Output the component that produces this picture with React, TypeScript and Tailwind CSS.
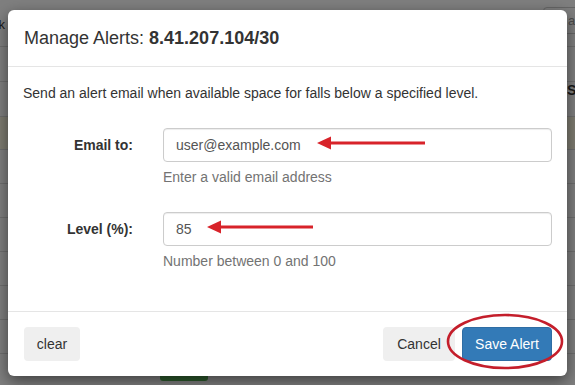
import { useState } from 'react';

function Arrow({ width }: { width: number }) {
  return (
    <svg width={width} height="14" viewBox={`0 0 ${width} 14`} className="block">
      <polygon points={`0,7 14,0.5 14,13.5`} fill="#d8232a" />
      <rect x="12" y="5.5" width={width - 12} height="3" fill="#d8232a" />
    </svg>
  );
}

export default function App() {
  const [email, setEmail] = useState('user@example.com');
  const [level, setLevel] = useState('85');

  const rows = [0, 1, 2, 3, 4, 5, 6, 7, 8];

  return (
    <div
      className="relative w-[575px] h-[385px] overflow-hidden bg-white text-[14px] text-[#333]"
      style={{ fontFamily: '"Liberation Sans", Arial, sans-serif' }}
    >
      {/* page behind the modal */}
      <div className="flex flex-col">
        <div className="h-[47px] flex items-start justify-between border-b border-[#ddd]">
          <span className="mt-[15px] -ml-[24px] text-[13px]">Back</span>
          <div className="mt-[7px] -mr-[20px] w-[52px] h-[27px] border border-[#ccc] rounded-[4px] pl-[24px] pt-[3px] text-[13px] text-[#999]">
            a
          </div>
        </div>
        <div className="h-[35px] border-b border-[#ddd] flex justify-end items-start">
          <span className="-mr-[6px] mt-[33px] font-bold leading-[20px]">St</span>
        </div>
        <div className="h-[35px] border-b border-[#ddd]" />
        <div className="h-[33px] bg-[#fcf8e3] border-b border-[#ddd]" />
        {rows.map((r) => (
          <div key={r} className="h-[34px] border-b border-[#ddd]" />
        ))}
      </div>
      <div className="absolute left-[160px] top-[355px] w-[48px] h-[26px] rounded-[3px] bg-[#5cb85c]" />

      {/* backdrop */}
      <div className="absolute inset-0 bg-black/50" />

      {/* modal */}
      <div className="absolute left-[8px] top-[10px] w-[559px] bg-white rounded-[6px] shadow-[0_5px_15px_rgba(0,0,0,0.5)]">
        <div className="px-[15px] pt-[15px] pb-[15px] border-b border-[#e5e5e5]">
          <h4 className="text-[18px] leading-[26px] ml-[1px]">
            Manage Alerts: <b>8.41.207.104/30</b>
          </h4>
        </div>

        <div className="px-[15px] pt-[16px] pb-[15px]">
          <p className="leading-[20px] mb-[25px]">
            Send an alert email when available space for falls below a specified level.
          </p>

          <div className="flex mb-[25px]">
            <label className="w-[110px] h-[34px] flex items-center justify-end font-bold">Email to:</label>
            <div className="ml-[30px] flex-1">
              <div className="relative">
                <input
                  value={email}
                  onChange={(e) => setEmail(e.target.value)}
                  className="w-full h-[34px] px-[12px] border border-[#ccc] rounded-[4px] text-[#555] shadow-[inset_0_1px_1px_rgba(0,0,0,0.075)] outline-none"
                />
                <div className="absolute left-[154px] top-[8px]">
                  <Arrow width={108} />
                </div>
              </div>
              <p className="mt-[5px] leading-[20px] text-[#737373]">Enter a valid email address</p>
            </div>
          </div>

          <div className="flex mb-[10px]">
            <label className="w-[110px] h-[34px] flex items-center justify-end font-bold">Level (%):</label>
            <div className="ml-[30px] flex-1">
              <div className="relative">
                <input
                  value={level}
                  onChange={(e) => setLevel(e.target.value)}
                  className="w-full h-[34px] px-[12px] border border-[#ccc] rounded-[4px] text-[#555] shadow-[inset_0_1px_1px_rgba(0,0,0,0.075)] outline-none"
                />
                <div className="absolute left-[44px] top-[8px]">
                  <Arrow width={106} />
                </div>
              </div>
              <p className="mt-[5px] leading-[20px] text-[#737373]">Number between 0 and 100</p>
            </div>
          </div>
          <div className="h-[15px]" />
        </div>

        <div className="flex items-center justify-between px-[15px] py-[15px] border-t border-[#e5e5e5]">
          <button className="h-[34px] w-[56px] ml-[1px] rounded-[4px] bg-[#efefef] text-[#333]">clear</button>
          <div className="flex gap-[7px]">
            <button className="h-[34px] w-[72px] rounded-[4px] bg-[#efefef] text-[#333]">Cancel</button>
            <button className="h-[34px] w-[90px] rounded-[4px] bg-[#337ab7] border border-[#2e6da4] text-white">
              Save Alert
            </button>
          </div>
        </div>
      </div>

      {/* annotation ring */}
      <svg className="absolute left-[444px] top-[312px] pointer-events-none" width="124" height="60" viewBox="0 0 124 60">
        <ellipse cx="61" cy="29.5" rx="57" ry="26.5" fill="none" stroke="#c41e2b" strokeWidth="2.6" />
      </svg>
    </div>
  );
}
